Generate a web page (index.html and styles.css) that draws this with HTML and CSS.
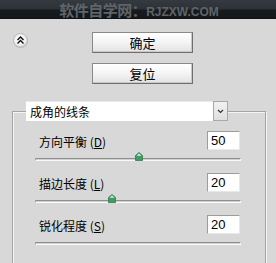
FILE: index.html
```html
<!DOCTYPE html>
<html>
<head>
<meta charset="utf-8">
<link rel="stylesheet" href="styles.css">
</head>
<body>
<div class="topbar"><span class="wm-cn">软件自学网：</span><span class="wm-en">RJZXW.COM</span></div>
<div class="actions">
  <span class="collapse">
    <svg width="15" height="15" viewBox="0 0 15 15">
      <defs>
        <radialGradient id="cg" cx="45%" cy="40%" r="60%">
          <stop offset="0" stop-color="#ffffff"/>
          <stop offset="0.7" stop-color="#f0f0f0"/>
          <stop offset="1" stop-color="#c4c4c4"/>
        </radialGradient>
      </defs>
      <circle cx="7.5" cy="7.5" r="7" fill="url(#cg)" stroke="#b4b4b4" stroke-width="1"/>
      <path d="M4.5 7 L7.5 4 L10.5 7 M4.5 10.5 L7.5 7.5 L10.5 10.5" fill="none" stroke="#111" stroke-width="1.4"/>
    </svg>
  </span>
  <div class="btns">
    <button class="btn">确定</button>
    <button class="btn">复位</button>
  </div>
</div>
<div class="group">
  <div class="select">
    <span class="select-text">成角的线条</span>
    <span class="select-arrow">
      <svg width="7" height="5" viewBox="0 0 7 5"><path d="M1 1 L3.5 3.5 L6 1" fill="none" stroke="#333" stroke-width="1.2"/></svg>
    </span>
  </div>
  <div class="row">
    <div class="row-head">
      <span class="label">方向平衡 (<u>D</u>)</span>
      <span class="num">50</span>
    </div>
    <div class="slider">
      <div class="track"></div>
      <svg class="thumb" style="left:100px" width="8" height="9" viewBox="0 0 8 9">
        <path d="M4 0.5 L7.5 3.5 L7.5 8.5 L0.5 8.5 L0.5 3.5 Z" fill="#3f9c62" stroke="#2f7a4c" stroke-width="0.8"/>
        <path d="M4 1.5 L6.5 3.8 L1.5 3.8 Z" fill="#d8f0e0"/>
      </svg>
    </div>
  </div>
  <div class="row">
    <div class="row-head">
      <span class="label">描边长度 (<u>L</u>)</span>
      <span class="num">20</span>
    </div>
    <div class="slider">
      <div class="track"></div>
      <svg class="thumb" style="left:73px" width="8" height="9" viewBox="0 0 8 9">
        <path d="M4 0.5 L7.5 3.5 L7.5 8.5 L0.5 8.5 L0.5 3.5 Z" fill="#3f9c62" stroke="#2f7a4c" stroke-width="0.8"/>
        <path d="M4 1.5 L6.5 3.8 L1.5 3.8 Z" fill="#d8f0e0"/>
      </svg>
    </div>
  </div>
  <div class="row">
    <div class="row-head">
      <span class="label">锐化程度 (<u>S</u>)</span>
      <span class="num">20</span>
    </div>
    <div class="slider">
      <div class="track"></div>
    </div>
  </div>
</div>
</body>
</html>
```
FILE: styles.css
```css
html, body {
  margin: 0;
  padding: 0;
}
body {
  width: 276px;
  height: 263px;
  overflow: hidden;
  background: #d8d8d8;
  font-family: "Noto Sans CJK SC", "Liberation Sans", sans-serif;
  color: #000;
}
.topbar {
  height: 19px;
  background: linear-gradient(#343a3f 0, #2c3237 9px, #171b1e 10px, #14181b 18px, #0b0d0e 19px);
  text-align: center;
  color: #5f6469;
  line-height: 18px;
  white-space: nowrap;
  padding-left: 2px;
  box-sizing: border-box;
}
.wm-cn {
  font-size: 15px;
  font-weight: bold;
  letter-spacing: -0.5px;
}
.wm-en {
  font-family: "Liberation Sans", sans-serif;
  font-size: 12px;
  font-weight: bold;
}
.actions {
  display: flex;
  padding-top: 13px;
}
.collapse {
  margin-left: 13px;
  margin-top: 1px;
  width: 15px;
  height: 15px;
  display: block;
}
.collapse svg { display: block; }
.btns {
  margin-left: 64px;
  display: flex;
  flex-direction: column;
  gap: 10px;
}
.btn {
  width: 101px;
  height: 21px;
  margin: 0;
  padding: 0;
  box-sizing: border-box;
  border: 1px solid #8a8a8a;
  border-right-color: #6f6f6f;
  border-bottom-color: #6f6f6f;
  background: linear-gradient(#ffffff, #f4f4f4 50%, #e2e2e2);
  box-shadow: inset -1px -1px 0 #c8c8c8;
  font-family: "Noto Sans CJK SC", sans-serif;
  font-size: 13px;
  line-height: 18px;
  color: #000;
}
.group {
  margin: 27px 0 0 12px;
  width: 254px;
  height: 154px;
  box-sizing: border-box;
  border: 1px solid #a4a4a4;
  box-shadow: inset 1px 1px 0 #f4f4f4, 1px 1px 0 #f4f4f4;
}
.select {
  margin: -11px 0 0 13px;
  width: 202px;
  height: 20px;
  display: flex;
  background: #fff;
}
.select-text {
  flex: 1;
  font-size: 12px;
  line-height: 20px;
  padding-left: 4px;
  border-top: 1px solid #e8e8e8;
}
.select-arrow {
  width: 15px;
  box-sizing: border-box;
  background: linear-gradient(#f2f2f2, #dedede);
  border: 1px solid #a8a8a8;
  display: flex;
  align-items: center;
  justify-content: center;
}
.select-arrow svg { display: block; }
.select + .row { margin-top: 10px; }
.row-head {
  display: flex;
  align-items: center;
  height: 19px;
  padding-left: 26px;
  padding-right: 25px;
}
.label {
  flex: 1;
  font-size: 12px;
  line-height: 19px;
  padding-top: 2px;
}
.label u {
  text-decoration: underline;
}
.num {
  width: 33px;
  height: 19px;
  box-sizing: border-box;
  background: #fff;
  border: 1px solid #9c9c9c;
  border-right-color: #e8e8e8;
  border-bottom-color: #e8e8e8;
  font-family: "Liberation Sans", sans-serif;
  font-size: 13px;
  line-height: 17px;
  padding-left: 3px;
}
.slider {
  position: relative;
  height: 23px;
  margin-left: 22px;
  width: 206px;
}
.track {
  position: relative;
  top: 8px;
  height: 3px;
  box-sizing: border-box;
  border-top: 1px solid #8e8e8e;
  border-bottom: 1px solid #fafafa;
  border-left: 1px solid #a0a0a0;
  border-right: 1px solid #fafafa;
  background: #d0d0d0;
  border-radius: 1px;
}
.thumb {
  position: absolute;
  top: 2px;
  display: block;
}
```
